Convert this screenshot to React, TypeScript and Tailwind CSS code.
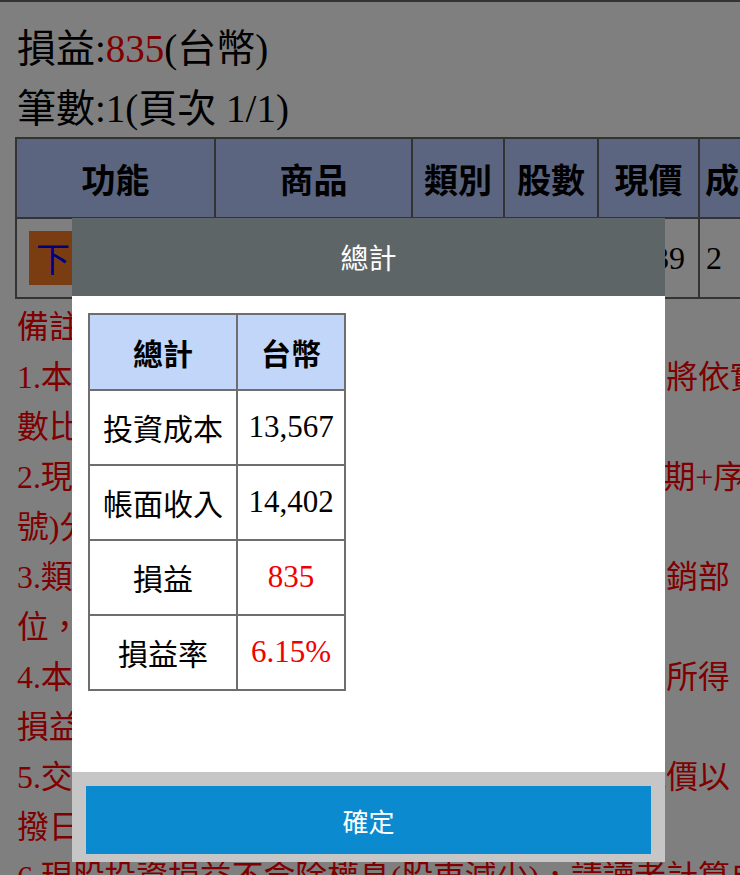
import React from "react";

const serif = "font-['Liberation_Serif','Noto_Sans_CJK_TC',serif]";
const sans = "font-['Noto_Sans_CJK_TC',sans-serif]";

const notes = [
  "備註：",
  "1.本頁資料(含手續費及交易稅)僅供參考，損益將依實際成交股",
  "數比例分攤計算。",
  "2.現股損益以先進先出法逐筆沖銷計算 (成交日期+序號)",
  "號)分批沖銷計算。",
  "3.類別(現股)損益均已扣除手續費及交易稅，沖銷部",
  "位，以加權平均成本計算。",
  "4.本頁損益(未實現)僅供參考，不代表實際交易所得",
  "損益。",
  "5.交易成本(含手續費)依成交日期計算，現股現價以",
  "撥日期為準。",
  "6.現股投資損益不含除權息(股東減少)，請讀者計算自行",
];

const headers = ["功能", "商品", "類別", "股數", "現價", "成本均價", "損益", "報酬率"];
const widths = [199, 197, 92, 94, 101, 146, 120, 120];

const rows: [string, string, boolean][] = [
  ["投資成本", "13,567", false],
  ["帳面收入", "14,402", false],
  ["損益", "835", true],
  ["損益率", "6.15%", true],
];

export default function App() {
  return (
    <div className="relative w-[740px] h-[875px] overflow-hidden bg-white">
      {/* background page */}
      <div className="w-[1100px] border-t-2 border-[#666666]">
        <div className={`pt-[17px] pl-[17px] text-[39px] text-black whitespace-nowrap ${serif}`}>
          <div className="leading-[60px]">
            損益:<span className="text-[#ff0000]">835</span>(台幣)
          </div>
          <div className="leading-[60px]">筆數:1(頁次 1/1)</div>
        </div>
        <table className="ml-[15px] -mt-[2px] table-fixed border-collapse border-2 border-[#666666]">
          <colgroup>
            {widths.map((w, i) => (
              <col key={i} style={{ width: w }} />
            ))}
          </colgroup>
          <thead>
            <tr className="bg-[#b6caff]">
              {headers.map((h) => (
                <th
                  key={h}
                  className={`h-[80px] border-2 border-[#666666] px-[5px] text-center text-[34px] font-bold text-black whitespace-nowrap ${sans}`}
                >
                  {h}
                </th>
              ))}
            </tr>
          </thead>
          <tbody>
            <tr>
              <td className="h-[80px] border-2 border-[#666666] pl-[12px]">
                <span className={`inline-block h-[54px] bg-[#f47a25] px-[7px] text-[34px] leading-[54px] text-[#0000ff] ${sans}`}>
                  下單
                </span>
              </td>
              <td className={`border-2 border-[#666666] text-center text-[32px] ${serif}`}>元大台灣50</td>
              <td className={`border-2 border-[#666666] text-center text-[32px] ${serif}`}>現股</td>
              <td className={`border-2 border-[#666666] text-center text-[32px] ${serif}`}>500</td>
              <td className={`border-2 border-[#666666] pr-[13px] text-right text-[32px] ${serif}`}>28.39</td>
              <td className={`border-2 border-[#666666] pl-[6px] text-left text-[32px] ${serif}`}>2</td>
              <td className={`border-2 border-[#666666] text-center text-[32px] text-[#ff0000] ${serif}`}>835</td>
              <td className={`border-2 border-[#666666] text-center text-[32px] text-[#ff0000] ${serif}`}>6.15%</td>
            </tr>
          </tbody>
        </table>
        <div className={`mt-[4px] pl-[17px] text-[31.8px] leading-[50px] text-[#ff0000] ${serif}`}>
          {notes.map((n, i) => (
            <div key={i} className="whitespace-nowrap">
              {n}
            </div>
          ))}
        </div>
      </div>

      {/* overlay */}
      <div className="absolute inset-0 bg-black/50" />

      {/* dialog */}
      <div className="absolute left-[72px] top-[218px] flex w-[593px] flex-col">
        <div className={`flex h-[78px] items-center justify-center bg-[#5e6567] text-[28px] text-white ${sans}`}>
          總計
        </div>
        <div className="h-[476px] bg-white pl-[16px] pt-[17px]">
          <table className="table-fixed border-collapse border-2 border-[#6e6e6e]">
            <colgroup>
              <col style={{ width: 148 }} />
              <col style={{ width: 108 }} />
            </colgroup>
            <thead>
              <tr className="bg-[#c2d6fa]">
                <th className={`h-[76px] border-2 border-[#6e6e6e] text-center text-[30px] font-bold text-black ${sans}`}>總計</th>
                <th className={`h-[76px] border-2 border-[#6e6e6e] text-center text-[30px] font-bold text-black ${sans}`}>台幣</th>
              </tr>
            </thead>
            <tbody>
              {rows.map(([label, value, red]) => (
                <tr key={label}>
                  <td className={`h-[75px] border-2 border-[#6e6e6e] text-center text-[30px] text-black ${sans}`}>{label}</td>
                  <td
                    className={`h-[75px] border-2 border-[#6e6e6e] text-center text-[31px] ${serif} ${
                      red ? "text-[#f00000]" : "text-black"
                    }`}
                  >
                    {value}
                  </td>
                </tr>
              ))}
            </tbody>
          </table>
        </div>
        <div className="h-[90px] bg-[#c6c6c6] px-[14px] pt-[14px] pb-[8px]">
          <button className={`flex h-[68px] w-full items-center justify-center bg-[#0b8ad0] text-[26px] text-white ${sans}`}>
            確定
          </button>
        </div>
      </div>
    </div>
  );
}
